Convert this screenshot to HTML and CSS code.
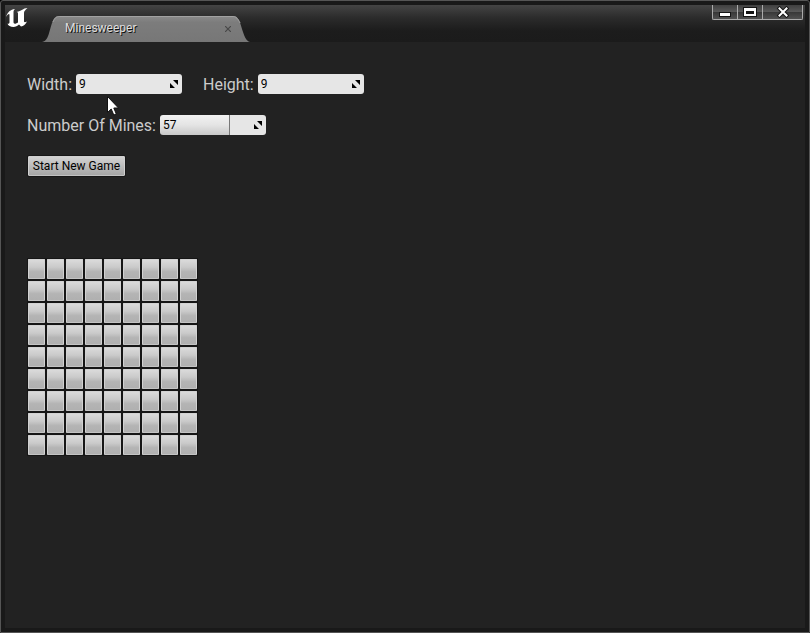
FILE: index.html
```
<!DOCTYPE html>
<html lang="en">
<head>
<meta charset="utf-8">
<title>Minesweeper</title>
<link rel="stylesheet" href="styles.css">
</head>
<body>
<div class="window">
  <header class="titlebar">
    <svg class="logo" viewBox="0 0 24 20" aria-hidden="true">
      <path d="M1 9C2.500 4 5.500 1.500 10 1C8.800 2 8.500 3 8.500 4.500V14C8.500 15.500 9.500 16 11 15.500L13 14.500V5.500C13 4.500 12.500 4 11.500 4C14 3.200 16.500 2.500 19.500 .5L22.500 0C20 2 19 3.500 19 5V13C19 14.500 20 14.500 22 13.500C20.500 16.500 18.500 18 16 18.500L14 16.500C12.500 18 10.500 19 8.500 19C5.500 19 3 17.500 2.500 15.500C4 16 4.500 15.500 4.500 14V7C4.500 5 2.500 6.500 1 9Z"/>
    </svg>
    <div class="tab">
      <svg class="tab-shape" viewBox="0 0 210 26" preserveAspectRatio="none" aria-hidden="true">
        <defs><linearGradient id="tabFill" x1="0" y1="0" x2="0" y2="1"><stop offset="0" stop-color="#8b8b8b"/><stop offset=".25" stop-color="#7c7c7c"/><stop offset="1" stop-color="#777"/></linearGradient></defs>
        <path fill="url(#tabFill)" d="M0 26C5 25 6 21 8 14C11 4 12 0 18 0H193C197 0 199 3 201 10C204 20 206 25 210 26Z"/>
        <path fill="none" stroke="#a2a2a2" d="M11 6C13 2 14 .5 18 .5H193C196 .5 198 3 200 7"/>
      </svg>
      <span class="tab-title">Minesweeper</span>
      <button class="tab-close" type="button" aria-label="Close tab"><svg viewBox="0 0 6 6"><path d="M0 0L6 6M6 0L0 6"/></svg></button>
    </div>
    <div class="controls">
      <button type="button" aria-label="Minimize"><svg viewBox="0 0 14 12"><path class="edge" d="M1 6H13V11H1Z"/><path d="M2 7H12V10H2Z"/></svg></button>
      <button type="button" aria-label="Maximize"><svg viewBox="0 0 14 12"><path class="edge" d="M0 1H14V11H0Z"/><path fill-rule="evenodd" d="M1 2H13V10H1ZM3 5V8H11V5Z"/></svg></button>
      <button class="close" type="button" aria-label="Close"><svg viewBox="0 0 14 12"><path class="cross-edge" d="M3.500 2.500L10.500 9.500M10.500 2.500L3.500 9.500"/><path class="cross" d="M3.500 2.500L10.500 9.500M10.500 2.500L3.500 9.500"/></svg></button>
    </div>
  </header>
  <main class="content">
    <form class="settings">
      <div class="row">
        <label for="width">Width:</label>
        <span class="spin"><input id="width" type="text" value="9"><svg viewBox="0 0 8 8" aria-hidden="true"><path d="M3 0H8V5ZM0 3L5 8H0Z"/></svg></span>
        <label class="second" for="height">Height:</label>
        <span class="spin"><input id="height" type="text" value="9"><svg viewBox="0 0 8 8" aria-hidden="true"><path d="M3 0H8V5ZM0 3L5 8H0Z"/></svg></span>
      </div>
      <div class="row">
        <label for="mines">Number Of Mines:</label>
        <span class="spin filled"><input id="mines" type="text" value="57"><svg viewBox="0 0 8 8" aria-hidden="true"><path d="M3 0H8V5ZM0 3L5 8H0Z"/></svg></span>
      </div>
      <button class="start" type="button">Start New Game</button>
    </form>
    <div class="board" id="board"></div>
  </main>
  <svg class="pointer" viewBox="0 0 12 20" aria-hidden="true"><path d="M.5 .5V16.500L4.200 13L6.800 19L9.300 18L6.800 12H11.500Z"/></svg>
</div>
<script src="board.js"></script>
</body>
</html>
```
FILE: styles.css
```
* { box-sizing: border-box; }
body {
  margin: 0;
  background: #000;
  font-family: Roboto, "Liberation Sans", sans-serif;
}
button { margin: 0; padding: 0; font-family: inherit; }
svg { display: block; }
.window {
  position: relative;
  display: flex;
  flex-direction: column;
  min-height: 100vh;
  padding: 4px;
  border: 1px solid #555;
  border-radius: 3px 3px 0 0;
  background: #191919;
}
.titlebar {
  display: flex;
  align-items: flex-start;
  height: 37px;
  background: linear-gradient(#444, #2b2b2b 35%, #1c1c1c 70%, #1b1b1b);
}
.logo { width: 24px; height: 20px; margin-top: 3px; fill: #fff; }
.tab {
  position: relative;
  display: flex;
  align-items: center;
  width: 208px;
  height: 26px;
  margin: 11px 0 0 13px;
  padding: 0 19px 0 23px;
}
.tab-shape { position: absolute; inset: 0; width: 100%; height: 100%; }
.tab-title {
  position: relative;
  flex: 1;
  font-size: 12px;
  line-height: 14px;
  padding-bottom: 2px;
  color: #ddd;
  text-shadow: 1px 1px 0 #111;
}
.tab-close { position: relative; border: 0; background: none; }
.tab-close svg { width: 6px; height: 6px; stroke: #484848; stroke-width: 1.200; }
.controls { display: flex; margin-left: auto; margin-right: 2px; }
.controls button {
  display: grid;
  place-items: center;
  width: 25px;
  height: 15px;
  border: solid #aaa;
  border-width: 0 0 1px 1px;
  background: linear-gradient(#404040, #5a5a5a 50%, #383838 52%, #505050);
}
.controls button:first-child { border-bottom-left-radius: 2px; }
.controls .close { width: 41px; border-right-width: 1px; border-bottom-right-radius: 2px; }
.controls svg { width: 14px; height: 12px; fill: #fff; }
.controls .edge { fill: #151515; }
.cross-edge { stroke: #151515; stroke-width: 4; stroke-linecap: square; }
.cross { stroke: #fff; stroke-width: 2; stroke-linecap: square; }
.content {
  flex: 1;
  padding: 32px 22px;
  background: #222;
}
.settings { display: flex; flex-direction: column; align-items: flex-start; gap: 21px; }
.row { display: flex; align-items: center; height: 20px; }
.row label { margin-right: 4px; font-size: 16px; line-height: 20px; padding-top: 2px; color: #ccc; }
.row .second { margin-left: 21px; }
.spin {
  display: flex;
  align-items: center;
  width: 106px;
  height: 20px;
  padding-right: 4px;
  border-radius: 3px;
  background: #e6e6e6;
}
.spin input {
  flex: 1;
  min-width: 0;
  height: 20px;
  padding: 0 3px;
  border: 0;
  outline: 0;
  background: none;
  font: 12px Roboto, "Liberation Sans", sans-serif;
  color: #000;
}
.spin svg { width: 8px; height: 8px; }
.filled {
  background: linear-gradient(90deg, transparent 69px, #777 69px, #777 70px, transparent 70px), linear-gradient(90deg, transparent 70px, #e6e6e6 70px), linear-gradient(#f2f2f2, #e4e4e4 50%, #c8c8c8);
}
.start {
  width: 97px;
  height: 20px;
  margin-left: 1px;
  border: 1px solid #d0d0d0;
  border-bottom-color: #c2c2c2;
  border-radius: 1px;
  outline: 1px solid #171717;
  background: linear-gradient(#d2d2d2, #a6a6a6);
  font-size: 12px;
  line-height: 18px;
  color: #000;
}
.board {
  display: grid;
  grid-template-columns: repeat(9, 17px);
  grid-auto-rows: 20px;
  gap: 2px;
  width: max-content;
  margin-top: 82px;
  padding: 1px;
  background: #161616;
}
.tile {
  border: 1px solid #d2d2d2;
  border-bottom-color: #c4c4c4;
  border-radius: 1px;
  background: linear-gradient(#dadada, #cacaca 40%, #b4b4b4 65%, #b0b0b0);
}
.pointer { position: absolute; left: 106px; top: 95px; width: 12px; height: 20px; fill: #fff; stroke: #111; }
```
FILE: board.js
```
const size = 9;
const board = document.getElementById("board");
for (let i = 0; i < size * size; i++) {
  const tile = document.createElement("button");
  tile.type = "button";
  tile.className = "tile";
  tile.setAttribute("aria-label", `Row ${Math.floor(i / size) + 1}, column ${i % size + 1}`);
  board.append(tile);
}
```
